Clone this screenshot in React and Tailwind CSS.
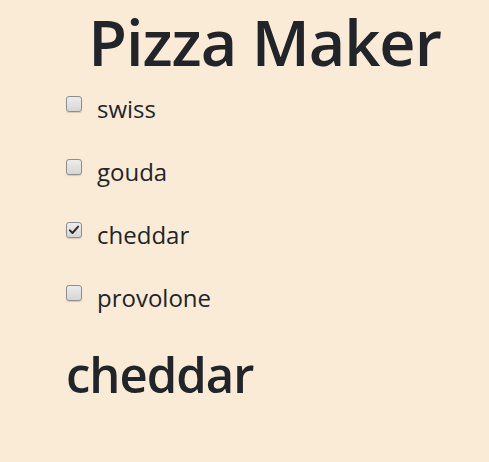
import { useState } from 'react';

const CHEESES = ['swiss', 'gouda', 'cheddar', 'provolone'];

function Box({ checked }) {
  return (
    <span className="mt-[1px] flex h-4 w-4 shrink-0 items-center justify-center rounded-[3px] border border-[#8e8e8e] bg-gradient-to-b from-[#ececec] to-[#d6d6d6] shadow-[0_1px_1px_rgba(0,0,0,0.15)]">
      {checked && (
        <svg viewBox="0 0 16 16" className="h-3 w-3">
          <path d="M2.5 8.5 L6 12 L13.5 3.5" fill="none" stroke="#2b2b2b" strokeWidth="2.6" strokeLinecap="round" strokeLinejoin="round" />
        </svg>
      )}
    </span>
  );
}

export default function App() {
  const [picked, setPicked] = useState('cheddar');

  return (
    <div className="min-h-screen bg-[#faebd7] pl-10 text-[#212529] font-['Open_Sans',sans-serif]">
      <h1 className="h-[80px] pt-[2px] text-center text-[63px] font-semibold leading-[80px] tracking-[-1px]">Pizza Maker</h1>

      <ul className="pl-[26px] pt-[15px]">
        {CHEESES.map((c) => (
          <li key={c} className="flex h-[63px] items-start">
            <label className="flex cursor-pointer items-start gap-[15px]" onClick={() => setPicked(c)}>
              <Box checked={picked === c} />
              <span className="text-[24px] leading-[28px]">{c}</span>
            </label>
          </li>
        ))}
      </ul>

      <h2 className="-mt-[3px] pl-[26px] text-[49px] font-semibold leading-[60px] tracking-[-1px]">{picked}</h2>
    </div>
  );
}
